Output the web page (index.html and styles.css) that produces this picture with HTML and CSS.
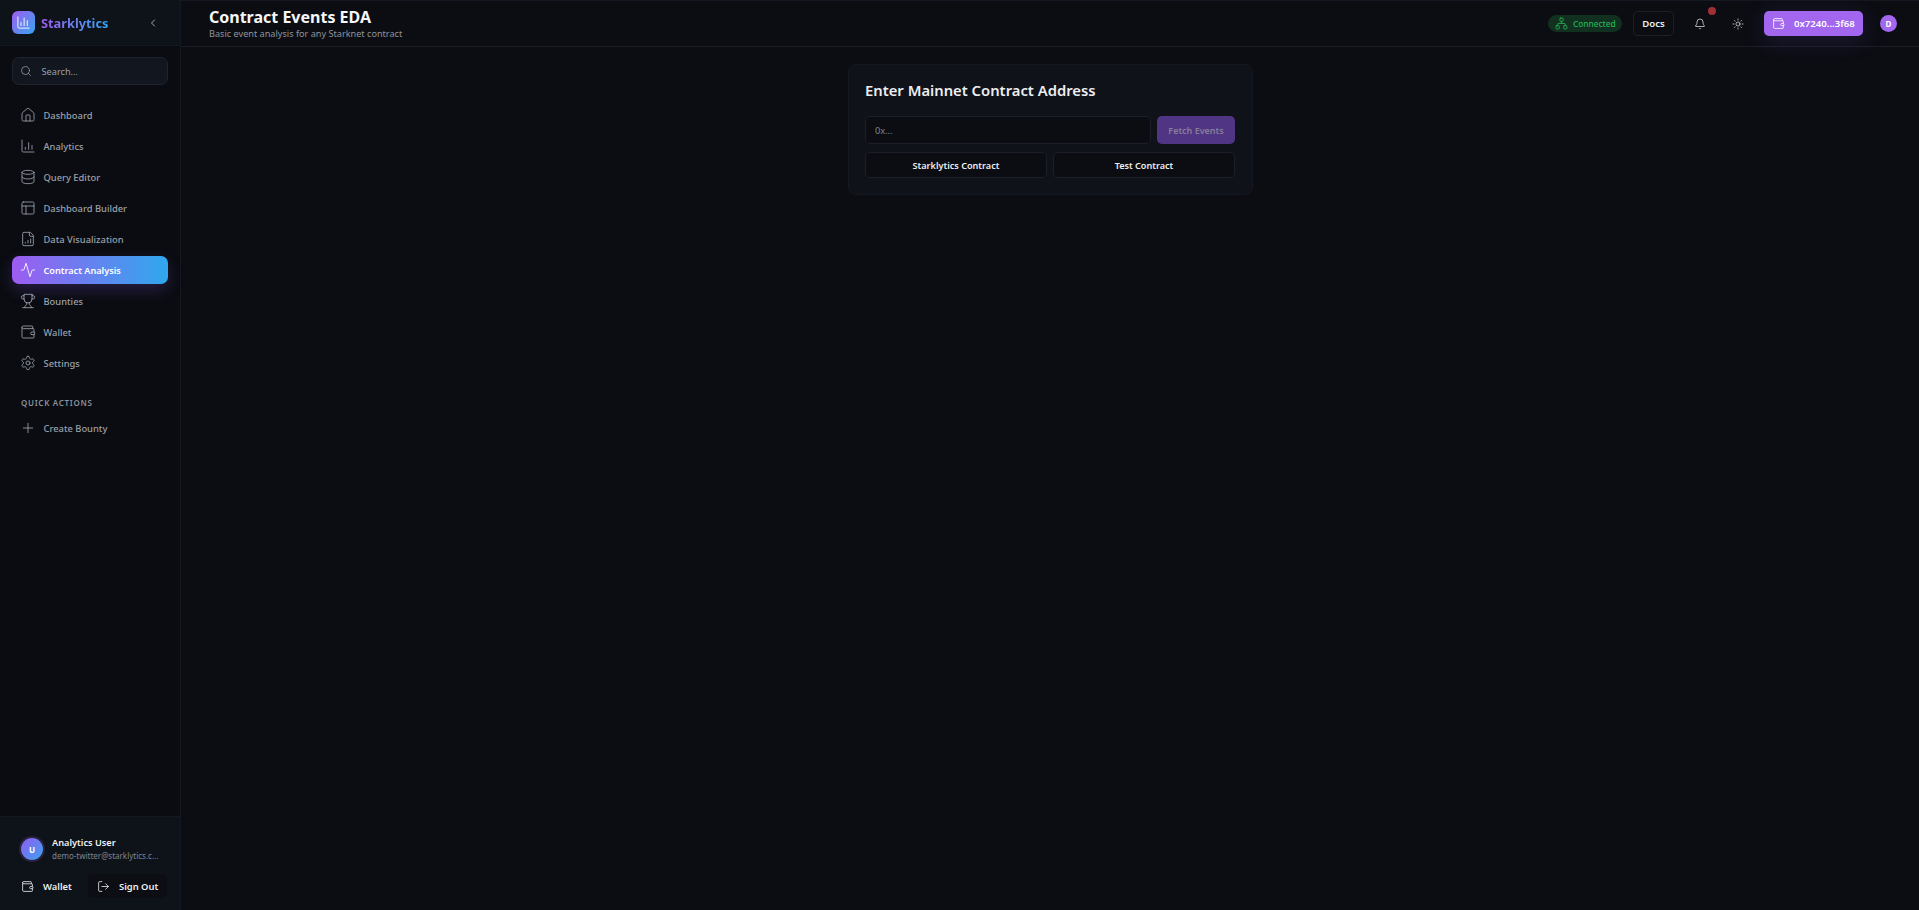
FILE: index.html
```html
<!DOCTYPE html>
<html lang="en">
<head>
    <meta charset="UTF-8">
    <meta name="viewport" content="width=device-width, initial-scale=1.0">
    <title>Contract Events EDA</title>
    <link rel="stylesheet" href="styles.css">
</head>
<body>
    <div class="app">
        <aside class="sidebar">
            <div class="brand">
                <div class="logo">
                    <svg viewBox="0 0 24 24" class="logo-icon"><path d="M3 3v16a2 2 0 0 0 2 2h16"/><path d="M8 17v-5"/><path d="M13 17V5"/><path d="M18 17V9"/></svg>
                </div>
                <span class="brand-name">Starklytics</span>
                <svg viewBox="0 0 24 24" class="collapse"><path d="m15 18-6-6 6-6"/></svg>
            </div>
            <div class="search-wrap">
                <div class="search">
                    <svg viewBox="0 0 24 24" class="icon-sm"><circle cx="11" cy="11" r="8"/><path d="m21 21-4.3-4.3"/></svg>
                    <span>Search...</span>
                </div>
            </div>
            <nav class="nav">
                <a class="nav-item"><svg viewBox="0 0 24 24" class="icon"><path d="M15 21v-8a1 1 0 0 0-1-1h-4a1 1 0 0 0-1 1v8"/><path d="M3 10a2 2 0 0 1 .709-1.528l7-5.999a2 2 0 0 1 2.582 0l7 5.999A2 2 0 0 1 21 10v9a2 2 0 0 1-2 2H5a2 2 0 0 1-2-2z"/></svg>Dashboard</a>
                <a class="nav-item"><svg viewBox="0 0 24 24" class="icon"><path d="M3 3v16a2 2 0 0 0 2 2h16"/><path d="M8 17v-3"/><path d="M13 17V7"/><path d="M18 17v-6"/></svg>Analytics</a>
                <a class="nav-item"><svg viewBox="0 0 24 24" class="icon"><ellipse cx="12" cy="5" rx="9" ry="3"/><path d="M3 5v14a9 3 0 0 0 18 0V5"/><path d="M3 12a9 3 0 0 0 18 0"/></svg>Query Editor</a>
                <a class="nav-item"><svg viewBox="0 0 24 24" class="icon"><rect x="3" y="3" width="18" height="18" rx="2"/><path d="M3 9h18"/><path d="M9 21V9"/></svg>Dashboard Builder</a>
                <a class="nav-item"><svg viewBox="0 0 24 24" class="icon"><path d="M15 2H6a2 2 0 0 0-2 2v16a2 2 0 0 0 2 2h12a2 2 0 0 0 2-2V7z"/><path d="M14 2v4a2 2 0 0 0 2 2h4"/><path d="M8 18v-1"/><path d="M12 18v-4"/><path d="M16 18v-6"/></svg>Data Visualization</a>
                <a class="nav-item active"><svg viewBox="0 0 24 24" class="icon"><path d="M22 12h-2.48a2 2 0 0 0-1.93 1.46l-2.35 8.36a.25.25 0 0 1-.48 0L9.24 2.18a.25.25 0 0 0-.48 0l-2.35 8.36A2 2 0 0 1 4.49 12H2"/></svg>Contract Analysis</a>
                <a class="nav-item"><svg viewBox="0 0 24 24" class="icon"><path d="M6 9H4.5a2.5 2.5 0 0 1 0-5H6"/><path d="M18 9h1.5a2.5 2.5 0 0 0 0-5H18"/><path d="M4 22h16"/><path d="M10 14.66V17c0 .55-.47.98-.97 1.21C7.85 18.75 7 20.24 7 22"/><path d="M14 14.66V17c0 .55.47.98.97 1.21C16.15 18.75 17 20.24 17 22"/><path d="M18 2H6v7a6 6 0 0 0 12 0V2Z"/></svg>Bounties</a>
                <a class="nav-item"><svg viewBox="0 0 24 24" class="icon"><path d="M19 7V4a1 1 0 0 0-1-1H5a2 2 0 0 0 0 4h15a1 1 0 0 1 1 1v4h-3a2 2 0 0 0 0 4h3a1 1 0 0 0 1-1v-2a1 1 0 0 0-1-1"/><path d="M3 5v14a2 2 0 0 0 2 2h15a1 1 0 0 0 1-1v-4"/></svg>Wallet</a>
                <a class="nav-item"><svg viewBox="0 0 24 24" class="icon"><path d="M12.22 2h-.44a2 2 0 0 0-2 2v.18a2 2 0 0 1-1 1.73l-.43.25a2 2 0 0 1-2 0l-.15-.08a2 2 0 0 0-2.73.73l-.22.38a2 2 0 0 0 .73 2.73l.15.1a2 2 0 0 1 1 1.72v.51a2 2 0 0 1-1 1.74l-.15.09a2 2 0 0 0-.73 2.73l.22.38a2 2 0 0 0 2.73.73l.15-.08a2 2 0 0 1 2 0l.43.25a2 2 0 0 1 1 1.73V20a2 2 0 0 0 2 2h.44a2 2 0 0 0 2-2v-.18a2 2 0 0 1 1-1.73l.43-.25a2 2 0 0 1 2 0l.15.08a2 2 0 0 0 2.73-.73l.22-.39a2 2 0 0 0-.73-2.73l-.15-.08a2 2 0 0 1-1-1.74v-.5a2 2 0 0 1 1-1.74l.15-.09a2 2 0 0 0 .73-2.73l-.22-.38a2 2 0 0 0-2.73-.73l-.15.08a2 2 0 0 1-2 0l-.43-.25a2 2 0 0 1-1-1.73V4a2 2 0 0 0-2-2z"/><circle cx="12" cy="12" r="3"/></svg>Settings</a>
            </nav>
            <div class="quick">
                <div class="quick-title">QUICK ACTIONS</div>
                <a class="nav-item"><svg viewBox="0 0 24 24" class="icon"><path d="M5 12h14"/><path d="M12 5v14"/></svg>Create Bounty</a>
            </div>
            <div class="user-box">
                <div class="user">
                    <div class="user-avatar">U</div>
                    <div class="user-info">
                        <div class="user-name">Analytics User</div>
                        <div class="user-mail">demo-twitter@starklytics.c...</div>
                    </div>
                </div>
                <div class="user-actions">
                    <a class="user-btn wallet-link"><svg viewBox="0 0 24 24" class="icon-md"><path d="M19 7V4a1 1 0 0 0-1-1H5a2 2 0 0 0 0 4h15a1 1 0 0 1 1 1v4h-3a2 2 0 0 0 0 4h3a1 1 0 0 0 1-1v-2a1 1 0 0 0-1-1"/><path d="M3 5v14a2 2 0 0 0 2 2h15a1 1 0 0 0 1-1v-4"/></svg>Wallet</a>
                    <a class="user-btn signout"><svg viewBox="0 0 24 24" class="icon-md"><path d="M9 21H5a2 2 0 0 1-2-2V5a2 2 0 0 1 2-2h4"/><path d="m16 17 5-5-5-5"/><path d="M21 12H9"/></svg>Sign Out</a>
                </div>
            </div>
        </aside>
        <div class="main">
            <header class="topbar">
                <div class="page-head">
                    <h1>Contract Events EDA</h1>
                    <p>Basic event analysis for any Starknet contract</p>
                </div>
                <div class="top-actions">
                    <div class="status"><svg viewBox="0 0 24 24" class="icon-md"><rect x="16" y="16" width="6" height="6" rx="1"/><rect x="2" y="16" width="6" height="6" rx="1"/><rect x="9" y="2" width="6" height="6" rx="1"/><path d="M5 16v-3a1 1 0 0 1 1-1h12a1 1 0 0 1 1 1v3"/><path d="M12 12V8"/></svg>Connected</div>
                    <button class="docs">Docs</button>
                    <div class="icon-btn bell">
                        <svg viewBox="0 0 24 24" class="icon-sm"><path d="M10.268 21a2 2 0 0 0 3.464 0"/><path d="M3.262 15.326A1 1 0 0 0 4 17h16a1 1 0 0 0 .74-1.673C19.41 13.956 18 12.499 18 8A6 6 0 0 0 6 8c0 4.499-1.411 5.956-2.738 7.326"/></svg>
                        <span class="dot"></span>
                    </div>
                    <div class="icon-btn">
                        <svg viewBox="0 0 24 24" class="icon-sm"><circle cx="12" cy="12" r="4"/><path d="M12 2v2"/><path d="M12 20v2"/><path d="m4.93 4.93 1.41 1.41"/><path d="m17.66 17.66 1.41 1.41"/><path d="M2 12h2"/><path d="M20 12h2"/><path d="m6.34 17.66-1.41 1.41"/><path d="m19.07 4.93-1.41 1.41"/></svg>
                    </div>
                    <button class="wallet"><svg viewBox="0 0 24 24" class="icon-md"><path d="M19 7V4a1 1 0 0 0-1-1H5a2 2 0 0 0 0 4h15a1 1 0 0 1 1 1v4h-3a2 2 0 0 0 0 4h3a1 1 0 0 0 1-1v-2a1 1 0 0 0-1-1"/><path d="M3 5v14a2 2 0 0 0 2 2h15a1 1 0 0 0 1-1v-4"/></svg>0x7240...3f68</button>
                    <div class="avatar">D</div>
                </div>
            </header>
            <main class="content">
                <section class="card">
                    <h2>Enter Mainnet Contract Address</h2>
                    <div class="address-row">
                        <input type="text" class="address" placeholder="0x...">
                        <button class="fetch">Fetch Events</button>
                    </div>
                    <div class="preset-row">
                        <button class="preset">Starklytics Contract</button>
                        <button class="preset">Test Contract</button>
                    </div>
                </section>
            </main>
        </div>
    </div>
</body>
</html>
```

FILE: styles.css
```css
* {
    margin: 0;
    padding: 0;
    box-sizing: border-box;
}

html, body {
    height: 100%;
}

body {
    background: #0b0d12;
    color: #f4f5f7;
    font-family: "Noto Sans", "Open Sans", sans-serif;
    overflow: hidden;
}

svg {
    fill: none;
    stroke: currentColor;
    stroke-width: 1.5;
    stroke-linecap: round;
    stroke-linejoin: round;
    flex-shrink: 0;
}

.app {
    display: flex;
    height: 100%;
}

/* sidebar */
.sidebar {
    width: 181px;
    flex-shrink: 0;
    display: flex;
    flex-direction: column;
    background: #0a0c11;
    border-right: 1px solid #141822;
}

.brand {
    height: 46px;
    display: flex;
    align-items: center;
    padding: 0 12px;
    background: #0e1219;
    border-bottom: 1px solid #141822;
}

.logo {
    width: 23px;
    height: 23px;
    border-radius: 6px;
    background: linear-gradient(135deg, #a05cf0, #35a6ef);
    display: flex;
    align-items: center;
    justify-content: center;
    color: #fff;
}

.logo-icon {
    width: 15px;
    height: 15px;
}

.brand-name {
    margin-left: 6px;
    font-size: 12.8px;
    font-weight: 700;
    background: linear-gradient(90deg, #a05cf0, #35a6ef);
    -webkit-background-clip: text;
    background-clip: text;
    color: transparent;
}

.collapse {
    width: 12px;
    height: 12px;
    margin-left: auto;
    margin-right: 9px;
    color: #d5d8dd;
}

.search-wrap {
    padding: 11px 12px 0;
}

.search {
    height: 28px;
    display: flex;
    align-items: center;
    gap: 9.5px;
    padding: 0 7px;
    background: #12161e;
    border: 1px solid #1e2430;
    border-radius: 7px;
    font-size: 9.2px;
    color: #9aa0ab;
}

.icon-sm {
    width: 12px;
    height: 12px;
}

.icon-md {
    width: 13px;
    height: 13px;
}

.icon {
    width: 16px;
    height: 16px;
    stroke-width: 1.3;
}

.nav {
    display: flex;
    flex-direction: column;
    gap: 3px;
    padding: 16px 12px 0;
}

.nav-item {
    height: 28px;
    display: flex;
    align-items: center;
    gap: 7.5px;
    padding: 0 8px;
    border-radius: 7px;
    font-size: 9.35px;
    font-weight: 500;
    color: #9aa0ab;
}

.nav-item.active {
    background: linear-gradient(90deg, #9d5cf1, #2fa8ee);
    box-shadow: 0 6px 16px rgba(139, 92, 246, 0.22);
    color: #fff;
    font-weight: 600;
    font-size: 9.15px;
}

.quick {
    padding: 20px 12px 0;
}

.quick-title {
    padding: 0 9px;
    margin-bottom: 5px;
    font-size: 8px;
    line-height: 12px;
    font-weight: 600;
    letter-spacing: 0.7px;
    color: #8b919c;
}

.user-box {
    margin-top: auto;
    height: 94px;
    padding: 19px 12px 0;
    background: #0e1219;
    border-top: 1px solid #141822;
}

.user {
    display: flex;
    align-items: center;
    gap: 9px;
    padding-left: 9px;
}

.user-avatar {
    width: 22px;
    height: 22px;
    border-radius: 50%;
    background: linear-gradient(135deg, #8e5cf3, #3fa2ee);
    box-shadow: 0 0 0 2px #2a2140;
    display: flex;
    align-items: center;
    justify-content: center;
    font-size: 8px;
    font-weight: 700;
    color: #fff;
}

.user-name {
    font-size: 9.2px;
    font-weight: 600;
    color: #f0f1f3;
    line-height: 13px;
}

.user-mail {
    font-size: 8px;
    color: #7f8591;
    line-height: 13px;
}

.user-actions {
    display: flex;
    align-items: center;
    justify-content: space-between;
    margin-top: 12px;
}

.user-btn {
    height: 24px;
    display: flex;
    align-items: center;
    gap: 9px;
    padding: 0 9px;
    border-radius: 5px;
    font-size: 9.4px;
    font-weight: 600;
    color: #eceef1;
    white-space: nowrap;
}

.signout {
    width: 79px;
    background: #0c0e13;
    margin-right: 1px;
}

/* top bar */
.main {
    flex: 1;
    min-width: 0;
    display: flex;
    flex-direction: column;
}

.topbar {
    height: 47px;
    display: flex;
    align-items: center;
    justify-content: space-between;
    padding: 0 22px 0 28px;
    background: #0b0d12;
    border-bottom: 1px solid #1a1e29;
    border-top: 1px solid #141822;
}

.page-head h1 {
    font-size: 16px;
    font-weight: 700;
    line-height: 20px;
    color: #f5f6f8;
}

.page-head p {
    font-size: 9.15px;
    line-height: 13px;
    color: #8e949f;
}

.top-actions {
    display: flex;
    align-items: center;
}

.status {
    width: 74px;
    height: 17px;
    display: flex;
    align-items: center;
    gap: 5px;
    padding-left: 7px;
    border-radius: 9px;
    background: #12301f;
    font-size: 8.3px;
    font-weight: 500;
    color: #22b455;
}

.docs {
    width: 41px;
    height: 25px;
    margin-left: 11px;
    border: 1px solid #1c202b;
    border-radius: 5px;
    background: #0b0d12;
    font: 600 9.6px "Noto Sans", sans-serif;
    color: #eceef1;
}

.icon-btn {
    position: relative;
    width: 12px;
    height: 12px;
    color: #dfe1e5;
    display: flex;
}

.bell {
    margin-left: 20px;
}

.icon-btn + .icon-btn {
    margin-left: 26px;
}

.dot {
    position: absolute;
    top: -11px;
    right: -10px;
    width: 8px;
    height: 8px;
    border-radius: 50%;
    background: #a03033;
}

.wallet {
    width: 99px;
    height: 25px;
    margin-left: 20px;
    display: flex;
    align-items: center;
    gap: 9px;
    padding-left: 8px;
    border: none;
    border-radius: 5px;
    background: #a267ee;
    box-shadow: 0 4px 24px rgba(139, 92, 246, 0.18);
    font: 600 9.6px "Noto Sans", sans-serif;
    color: #fff;
}

.avatar {
    width: 17px;
    height: 17px;
    margin-left: 17px;
    border-radius: 50%;
    background: #a267ee;
    display: flex;
    align-items: center;
    justify-content: center;
    font-size: 8px;
    font-weight: 700;
    color: #fff;
}

/* card */
.content {
    flex: 1;
    display: flex;
    justify-content: center;
    align-items: flex-start;
    padding: 17px 0 0 1px;
}

.card {
    width: 405px;
    height: 131px;
    padding: 16px 17px 16px 16px;
    background: #0f1219;
    border: 1px solid #141822;
    border-radius: 8px;
}

.card h2 {
    font-size: 14.8px;
    font-weight: 600;
    line-height: 18px;
    color: #eceef1;
}

.address-row {
    display: flex;
    gap: 6px;
    margin-top: 17px;
}

.address {
    flex: 1;
    min-width: 0;
    height: 28px;
    padding: 0 9px;
    background: #0b0d12;
    border: 1px solid #1c202b;
    border-radius: 5px;
    font: 9.2px "Noto Sans", sans-serif;
    color: #eceef1;
    outline: none;
}

.address::placeholder {
    color: #7f8591;
}

.fetch {
    width: 78px;
    height: 28px;
    border: none;
    border-radius: 5px;
    background: #513585;
    font: 600 9px "Noto Sans", sans-serif;
    color: #867e98;
}

.preset-row {
    display: grid;
    grid-template-columns: 1fr 1fr;
    gap: 6px;
    margin-top: 8px;
}

.preset {
    height: 26px;
    background: #0b0d12;
    border: 1px solid #1c202b;
    border-radius: 5px;
    font: 600 9.1px "Noto Sans", sans-serif;
    color: #eceef1;
}
```
